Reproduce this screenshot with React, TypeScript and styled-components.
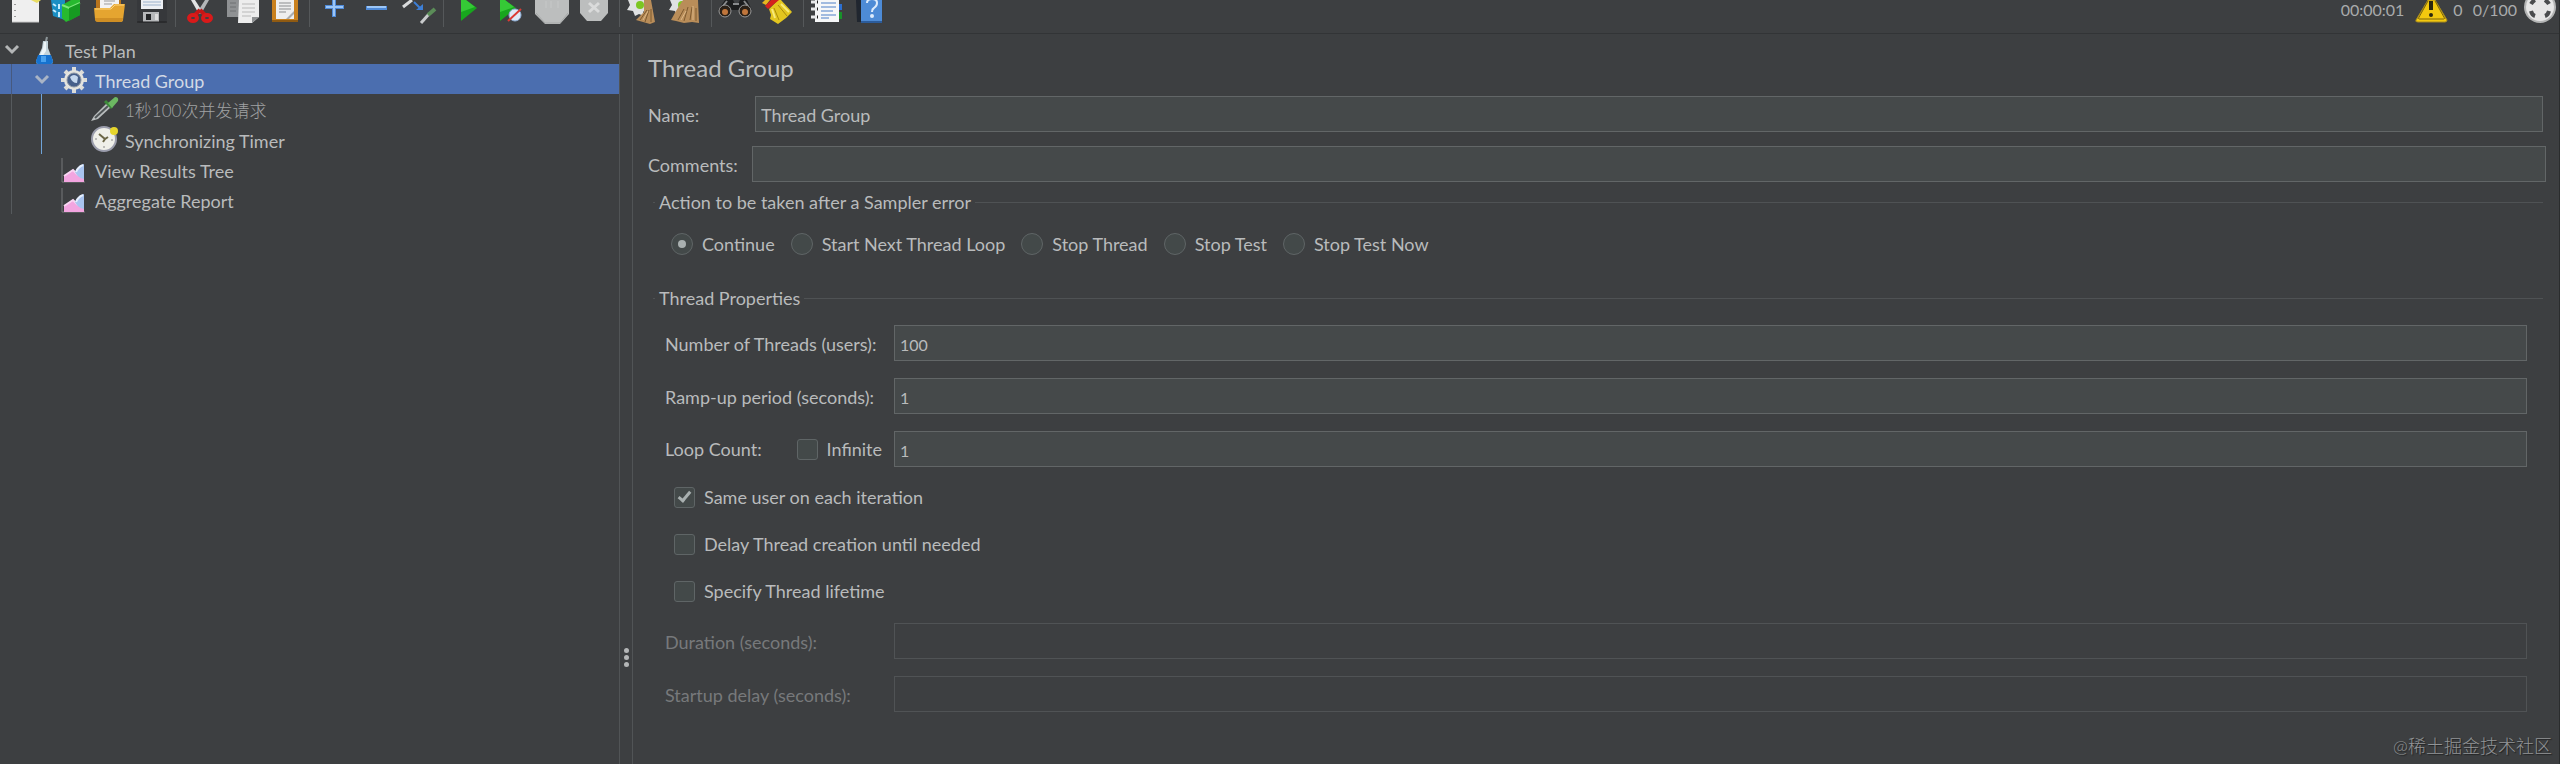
import React from "react";
import styled, { createGlobalStyle, css } from "styled-components";

const color = {
  bg: "#3d3f41",
  text: "#b9bbbc",
  dim: "#77797b",
  field: "#45494a",
  border: "#626667",
  line: "#4f5254",
  edge: "#323436",
  select: "#4b6eaf",
};

const GlobalStyle = createGlobalStyle`
  *, *::before, *::after { box-sizing: border-box; }
  body {
    margin: 0;
    background: ${color.bg};
    color: ${color.text};
    font-family: Lato, "Noto Sans CJK SC", sans-serif;
    font-size: 18px;
    line-height: 24px;
  }
  button, input { font: inherit; color: inherit; }
`;

const Window = styled.div`
  position: relative;
  display: flex;
  flex-direction: column;
  min-height: 100vh;
  overflow: hidden;
  border-right: 1px solid #2a2c2d;
`;

const Toolbar = styled.header`
  display: flex;
  align-items: flex-start;
  height: 34px;
  padding-left: 3px;
  border-bottom: 1px solid ${color.edge};
`;

const ToolGroup = styled.div`
  display: flex;
  & + & {
    padding-left: 8px;
    background: linear-gradient(#55585a, #55585a) 4px 0 / 1px 27px no-repeat;
  }
`;

const ToolButton = styled.button`
  display: block;
  width: 42px;
  height: 28px;
  padding: 0;
  border: 0;
  background: none;
  svg { display: block; }
`;

const Status = styled.div`
  display: flex;
  align-items: flex-start;
  margin-left: auto;
  padding-right: 2px;
  font-size: 16px;
  line-height: 20px;
  color: #a9abac;
  svg { display: block; }
`;

const Clock = styled.span`
  margin-right: 10px;
`;

const Count = styled.span`
  margin: 0 6px 0 4px;
`;

const Body = styled.div`
  display: flex;
  flex: 1;
`;

const Sidebar = styled.nav`
  flex: 0 0 620px;
  border-right: 1px solid #515456;
`;

const Tree = styled.ul`
  margin: 0;
  padding: 0;
  list-style: none;
`;

const Node = styled.li<{ $selected?: boolean }>`
  display: flex;
  height: 30px;
  background: ${(p) => (p.$selected ? color.select : "none")};
  color: ${(p) => (p.$selected ? "#d2d9e5" : color.text)};
`;

const Guide = styled.span<{ $tone?: string }>`
  width: 30px;
  ${(p) =>
    p.$tone &&
    css`
      background: linear-gradient(${p.$tone}, ${p.$tone}) 11px 0 / 1px 100% no-repeat;
    `}
`;

const Toggle = styled.button`
  width: 30px;
  padding: 0;
  border: 0;
  background: none;
  svg { display: block; }
`;

const NodeIcon = styled.span`
  width: 35px;
  svg { display: block; }
`;

const NodeText = styled.span<{ $muted?: boolean }>`
  padding-top: 5px;
  ${(p) => p.$muted && css`color: #a0a2a3; font-weight: 300; font-size: 17px;`}
`;

const Divider = styled.div`
  display: flex;
  flex-direction: column;
  align-items: center;
  width: 13px;
  padding-top: 614px;
  gap: 2px;
  border-right: 1px solid #515456;
`;

const Dot = styled.span`
  width: 5px;
  height: 5px;
  border-radius: 50%;
  background: #b4b6b7;
`;

const Panel = styled.main`
  flex: 1;
  min-width: 0;
  padding: 18px 12px 40px 15px;
`;

const Title = styled.h1`
  margin: 0 0 12px;
  font-size: 24px;
  line-height: 32px;
  font-weight: 400;
`;

const HeadRow = styled.div<{ $label: number; $end: number }>`
  display: grid;
  grid-template-columns: ${(p) => p.$label}px 1fr;
  align-items: center;
  margin-bottom: 14px;
  padding-right: ${(p) => p.$end}px;
  > label { padding-top: 2px; }
`;

const Field = styled.input<{ $numeric?: boolean }>`
  width: 100%;
  min-width: 0;
  height: 36px;
  padding: 2px 5px 0;
  border: 1px solid ${color.border};
  border-radius: 0;
  outline: 0;
  background: ${color.field};
  font-size: ${(p) => (p.$numeric ? 16 : 18)}px;
  &:disabled {
    border-color: #505355;
    background: ${color.bg};
  }
`;

const Group = styled.fieldset<{ $top: number }>`
  margin: ${(p) => p.$top}px 4px 0 5px;
  min-width: 0;
  padding: 0;
  border: 0 solid ${color.line};
  border-top-width: 1px;
`;

const Legend = styled.legend`
  margin-left: 2px;
  padding: 0 4px;
`;

const RadioRow = styled.div`
  display: flex;
  gap: 16px;
  padding: 18px 18px 0;
`;

const Choice = styled.label`
  display: flex;
  align-items: center;
  gap: 9px;
`;

const Radio = styled.input`
  display: grid;
  place-items: center;
  appearance: none;
  width: 22px;
  height: 22px;
  margin: 0;
  border: 1px solid #5f6566;
  border-radius: 50%;
  background: #434949;
  &:checked::after {
    content: "";
    width: 8px;
    height: 8px;
    border-radius: 50%;
    background: #a9b0b0;
  }
`;

const Check = styled.input`
  display: grid;
  justify-items: center;
  appearance: none;
  width: 21px;
  height: 21px;
  margin: 0;
  border: 1px solid #5f6566;
  border-radius: 3px;
  background: #434949;
  &:checked::after {
    content: "";
    width: 7px;
    height: 13px;
    margin-top: 1px;
    border: solid #a9b0b0;
    border-width: 0 3px 3px 0;
    transform: rotate(40deg);
  }
`;

const Rows = styled.div<{ $top: number }>`
  display: flex;
  flex-direction: column;
  gap: 17px;
  padding: ${(p) => p.$top}px 16px 0 12px;
`;

const Row = styled.div<{ $dim?: boolean }>`
  display: grid;
  grid-template-columns: 229px 1fr;
  align-items: center;
  color: ${(p) => (p.$dim ? color.dim : "inherit")};
  > label { padding-top: 2px; }
`;

const LoopCell = styled.div`
  display: flex;
  justify-content: space-between;
  padding-right: 12px;
`;

const Options = styled.div`
  display: flex;
  flex-direction: column;
  align-items: flex-start;
  gap: 23px;
  padding: 18px 21px 0;
`;

const Watermark = styled.div`
  position: absolute;
  right: 7px;
  bottom: 6px;
  font-size: 18px;
  font-weight: 300;
  color: #929496;
  text-shadow: 1px 1px 1px #1f2021;
`;

const Art = ({ w = 42, h = 28, children }: { w?: number; h?: number; children: React.ReactNode }) => (
  <svg width={w} height={h} viewBox={`0 0 ${w} ${h}`} aria-hidden="true">
    {children}
  </svg>
);

const NewIcon = () => (
  <Art>
    <path d="M9 0h27v22H9z" fill="#efefef" />
    <path d="M9 22h27" stroke="#c9c9c9" />
    <path d="M12 4v1M12 10v1M12 16v1" stroke="#999" strokeWidth="2" />
    <path d="M28 0h10l-4 3z" fill="#e9dd62" />
  </Art>
);
const TemplatesIcon = () => (
  <Art>
    <path d="M6 0h14v20l-12-4z" fill="#1a8fc4" />
    <path d="M8 4l3 2M8 10l3 2M14 4v5M14 12v5" stroke="#c3ecff" strokeWidth="2" />
    <path d="M17 5l9-5h9v15l-14 7-4-4z" fill="#27b92f" />
    <path d="M17 5l7 3 11-5" fill="none" stroke="#7fe77c" strokeWidth="2" />
    <path d="M24 8v13l11-6V3z" fill="#169a21" />
  </Art>
);
const OpenIcon = () => (
  <Art>
    <path d="M9 0h25v12H9z" fill="#b8741c" />
    <path d="M13 0h19v8H13z" fill="#f2f2f2" />
    <path d="M17 1h11M17 4h8" stroke="#9b9b9b" />
    <path d="M7 8h16l4-4h11l-2 16q0 2-3 2H11q-3 0-3-3z" fill="#e5a530" />
    <path d="M8 9h16l4-4h9" fill="none" stroke="#ffd478" />
    <path d="M8 18q0 4 3 4h22q3 0 3-4z" fill="#bf7f1c" opacity=".6" />
  </Art>
);
const SaveIcon = () => (
  <Art>
    <path d="M8 0h30v20l-2 3H10l-2-3z" fill="#36383b" />
    <path d="M12 0h22v9H12z" fill="#eceff3" />
    <path d="M14 2h18M14 5h18" stroke="#9cb2cc" />
    <path d="M14 12h16v10H14z" fill="#b6b8ba" />
    <path d="M17 14h5v6h-5z" fill="#232527" />
    <path d="M26 14h3v6h-3z" fill="#ddd" />
    <path d="M8 22h30" stroke="#1e1f20" />
  </Art>
);
const CutIcon = () => (
  <Art>
    <path d="M12 0h4l7 11-3 3z" fill="#e3e4e5" />
    <path d="M30 0h-4l-7 11 3 3z" fill="#b4b7b9" />
    <path d="M21 10l-5 5M21 10l5 5" stroke="#c51616" strokeWidth="4" />
    <ellipse cx="14" cy="18" rx="4" ry="3" fill="none" stroke="#d91a1a" strokeWidth="4" />
    <ellipse cx="28" cy="18" rx="4" ry="3" fill="none" stroke="#d91a1a" strokeWidth="4" />
  </Art>
);
const CopyIcon = () => (
  <Art>
    <path d="M6 0h20v17H6z" fill="#8f9193" />
    <path d="M9 3h6M9 7h6M9 11h6" stroke="#6f7173" />
    <path d="M18 0h20v17l-7 6H17z" fill="#ededed" />
    <path d="M21 4h13M21 8h13M21 12h13M21 16h9" stroke="#b9b9b9" />
    <path d="M31 23v-6h7z" fill="#8e9092" />
  </Art>
);
const PasteIcon = () => (
  <Art>
    <path d="M9 0h26v22H9z" fill="#c9801d" />
    <path d="M13 0h18v19H13z" fill="#eee" />
    <path d="M16 3h12M16 6h12M16 9h12M16 12h7" stroke="#8b8d8f" strokeWidth="1" />
    <path d="M23 19l8-8v3l-5 5z" fill="#a9abad" />
    <path d="M9 21h26" stroke="#8f5a12" strokeWidth="2" />
  </Art>
);
const PlusIcon = () => (
  <Art>
    <path d="M21 0v17M12 7h19" stroke="#4f8ad8" strokeWidth="4" />
    <path d="M21 0v16M13 7h17" stroke="#9cc6f6" strokeWidth="2" />
  </Art>
);
const MinusIcon = () => (
  <Art>
    <path d="M11 8h21" stroke="#4f8ad8" strokeWidth="4" />
    <path d="M12 7h19" stroke="#9cc6f6" strokeWidth="2" />
  </Art>
);
const ToggleIcon = () => (
  <Art>
    <path d="M6 7l9-7" stroke="#d9dbdc" strokeWidth="3" />
    <path d="M17 2l7 7" stroke="#3d7fd6" strokeWidth="2" />
    <path d="M26 4v6h-7z" fill="#3d7fd6" />
    <path d="M24 23l8-9" stroke="#c9cbcc" strokeWidth="3" />
    <path d="M31 15l7-6" stroke="#5b8d58" strokeWidth="4" />
  </Art>
);
const StartIcon = () => (
  <Art>
    <path d="M14 0h5l11 8-16 13z" fill="#18a61e" />
    <path d="M14 0h5l9 7-14 5z" fill="#35c936" />
  </Art>
);
const StartNowIcon = () => (
  <Art>
    <path d="M11 0h5l11 8-16 13z" fill="#18a61e" />
    <path d="M11 0h5l9 7-14 5z" fill="#35c936" />
    <circle cx="26" cy="15" r="6" fill="#dfe9f7" stroke="#8eaed6" />
    <path d="M19 21L32 9" stroke="#dc3a34" strokeWidth="2" />
  </Art>
);
const StopIcon = () => (
  <Art>
    <path d="M4 0h34v14l-9 10H14L4 14z" fill="#bcbebe" />
    <path d="M5 13l9 10h15l8-10" fill="none" stroke="#a6a8a8" />
    <path d="M15 1v7M20 1v7M27 1v7" stroke="#c6c8c8" />
  </Art>
);
const ShutdownIcon = () => (
  <Art>
    <path d="M7 0h28v13l-7 8H14l-7-8z" fill="#bcbebe" />
    <path d="M16 3l10 9M26 3l-10 9" stroke="#dadbdb" strokeWidth="3" />
  </Art>
);
const Sweep = ({ wide }: { wide?: boolean }) => (
  <Art>
    <path d="M5 0h17l2 8-4 4 1 4-5-2-4 2-2-5-6-1 3-5z" fill="#dfe1e2" />
    <circle cx="17" cy="5" r="4" fill="#7cc622" />
    <path d={wide ? "M18 0h15l1 23-7-1-8 1-8-2-5-1 5-9z" : "M21 0h7l4 22-5 2-14-4 8-8z"} fill="#b98d59" />
    <path
      d={wide ? "M13 20l6-11M19 21l4-14M25 20l2-13M31 21V8" : "M17 20l7-10M22 22l4-12M28 22V9"}
      stroke="#7d5a30"
    />
    <path d={wide ? "M16 20l5-9M28 20V6" : "M20 20l5-9"} stroke="#dcb888" />
  </Art>
);
const SearchIcon = () => (
  <Art>
    <path d="M10 0h8l2 4h3l2-4h7l5 10H3z" fill="#1c1d1e" />
    <path d="M12 1l-4 5M29 1l4 5M18 4h6" stroke="#888a8c" strokeWidth="2" />
    <circle cx="10" cy="11" r="6" fill="#2b2118" stroke="#98999a" />
    <circle cx="30" cy="11" r="6" fill="#2b2118" stroke="#98999a" />
    <circle cx="10" cy="12" r="3" fill="#c0763c" />
    <circle cx="30" cy="12" r="3" fill="#c0763c" />
  </Art>
);
const ResetIcon = () => (
  <Art>
    <path d="M5 3l3-3h5l-4 5z" fill="#e6b71f" />
    <path d="M12 9l9-9h3l11 12-6 6-8 6-8-5 1-4z" fill="#e3c61f" />
    <path d="M8 6L14 0h8L11 9z" fill="#d5221d" />
    <path d="M17 8l5 12M21 5l9 11" stroke="#a98b0b" />
    <path d="M15 9l3 9M24 4l8 8" stroke="#f7ea7b" strokeWidth="2" />
  </Art>
);
const FunctionIcon = () => (
  <Art>
    <path d="M29 4h6v6h-6z" fill="#2c6fd0" />
    <path d="M29 12h6v7h-6z" fill="#18912a" />
    <path d="M8 0h24v22H8z" fill="#f6f7f8" />
    <path d="M14 3h15M14 7h15M14 11h12M14 15h15M14 18h8" stroke="#4d7fc7" />
    <path d="M4 2h7M4 9h7M4 17h7" stroke="#e8e9ea" strokeWidth="3" />
    <path d="M10 2h1M10 9h1M10 17h1" stroke="#222" strokeWidth="3" />
  </Art>
);
const HelpIcon = () => (
  <Art>
    <path d="M7 0h5v22H8z" fill="#20262f" />
    <path d="M12 0h21v22H12z" fill="#4d8bd6" />
    <path d="M12 22h21" stroke="#2c5c9b" strokeWidth="2" />
    <path d="M18 3q0-4 5-4t5 4q0 3-3 5-2 1-2 4" fill="none" stroke="#dcebfc" strokeWidth="2" />
    <circle cx="23" cy="16" r="2" fill="#dcebfc" />
  </Art>
);

const tools: [string, () => React.JSX.Element][][] = [
  [["New", NewIcon], ["Templates", TemplatesIcon], ["Open", OpenIcon], ["Save", SaveIcon]],
  [["Cut", CutIcon], ["Copy", CopyIcon], ["Paste", PasteIcon]],
  [["Expand all", PlusIcon], ["Collapse all", MinusIcon], ["Toggle", ToggleIcon]],
  [["Start", StartIcon], ["Start no pauses", StartNowIcon], ["Stop", StopIcon], ["Shutdown", ShutdownIcon]],
  [["Clear", () => <Sweep />], ["Clear all", () => <Sweep wide />]],
  [["Search", SearchIcon], ["Reset search", ResetIcon]],
  [["Function helper", FunctionIcon], ["Help", HelpIcon]],
];

const WarningIcon = () => (
  <Art w={35}>
    <path d="M14 0h7l12 20q0 2-2 2H4q-3 0-2-2z" fill="#f2c80f" stroke="#a88a1c" />
    <path d="M17 1v9" stroke="#2b2710" strokeWidth="4" />
    <path d="M4 19L14 1M31 19L21 1M5 19h25" stroke="#7c660f" fill="none" />
    <circle cx="17" cy="15" r="2" fill="#2b2710" />
  </Art>
);
const TargetIcon = () => (
  <Art w={34}>
    <circle cx="17" cy="7" r="16" fill="#b4b5b5" />
    <circle cx="17" cy="7" r="14" fill="#e6e6e6" />
    <path d="M8 4q2-3 4-4M22 0q3 2 4 4M26 11q-1 4-4 5M12 16q-3-1-4-5" fill="none" stroke="#4a4c4e" strokeWidth="4" />
  </Art>
);

const Chevron = ({ tone }: { tone: string }) => (
  <Art w={30} h={30}>
    <path d="M6 12l6 6 6-6" fill="none" stroke={tone} strokeWidth="3" />
  </Art>
);
const FlaskIcon = () => (
  <Art w={30} h={30}>
    <path d="M13 7h5v7l5 13q0 3-2 3H8q-2 0-2-3l6-13z" fill="#c3d3da" />
    <path d="M14 8h2v9l-4 6H9l4-9z" fill="#edf5f8" />
    <path d="M8 21h13l2 6q0 3-2 3H8q-2 0-2-3z" fill="#1672cf" />
    <path d="M11 22h5v6h-5z" fill="#49a1ee" />
    <path d="M16 7l1-4" stroke="#8c9598" strokeWidth="2" />
  </Art>
);
const GearIcon = () => (
  <Art w={30} h={30}>
    <g stroke="#dcdcd8" strokeWidth="4">
      <path d="M14 3v26M1 16h26M5 7l18 18M23 7L5 25" />
    </g>
    <circle cx="14" cy="16" r="10" fill="#e4e4e0" />
    <circle cx="14" cy="16" r="7" fill="#465f8a" stroke="#8994a4" />
    <path d="M10 13q4-4 8 0l-1 6q-5 0-7-6z" fill="#c5d8ef" />
  </Art>
);
const PipetteIcon = () => (
  <Art w={30} h={30}>
    <path d="M1 27l3-5L17 9l4 4L8 25z" fill="#b9bdbe" />
    <path d="M5 24L18 12" stroke="#505557" strokeWidth="2" />
    <path d="M15 7l7 7" stroke="#3d8a3a" strokeWidth="3" />
    <path d="M18 9l7-6q4 0 3 4l-6 7z" fill="#6cb862" />
  </Art>
);
const TimerIcon = () => (
  <Art w={30} h={30}>
    <circle cx="14" cy="15" r="12" fill="#efefe9" stroke="#9b9dac" strokeWidth="2" />
    <path d="M9 10l6 5 3-2M15 15l-2 3" fill="none" stroke="#6b6647" strokeWidth="2" />
    <path d="M5 15h2M14 24v-2M23 16h-2" stroke="#888" />
    <circle cx="24" cy="7" r="4" fill="#e6d52c" />
  </Art>
);
const ChartIcon = () => (
  <Art w={30} h={30}>
    <path d="M2 4v24h23" fill="none" stroke="#76797b" />
    <path d="M4 28v-6l9-6 7 6h4v6z" fill="#f3a5e0" />
    <path d="M4 22l9-6 5 5" fill="none" stroke="#f8d6f2" strokeWidth="2" />
    <path d="M24 10v15q-6-1-9-7 2-6 9-8z" fill="#a9c4ef" />
    <path d="M23 11q-5 2-7 7" fill="none" stroke="#e6effc" strokeWidth="2" />
  </Art>
);

const GREY = "#565a5d";
const BLUE = "#6fa3d8";

const actions = ["Continue", "Start Next Thread Loop", "Stop Thread", "Stop Test", "Stop Test Now"];

export default function App() {
  return (
    <>
      <GlobalStyle />
      <Window>
        <Toolbar>
          {tools.map((group, i) => (
            <ToolGroup key={i}>
              {group.map(([name, Icon]) => (
                <ToolButton key={name} type="button" aria-label={name}>
                  <Icon />
                </ToolButton>
              ))}
            </ToolGroup>
          ))}
          <Status>
            <Clock>00:00:01</Clock>
            <WarningIcon />
            <Count>0</Count>
            <Count>0/100</Count>
            <TargetIcon />
          </Status>
        </Toolbar>
        <Body>
          <Sidebar aria-label="Test plan">
            <Tree>
              <Node>
                <Toggle type="button" aria-label="Collapse Test Plan"><Chevron tone="#b4b6b7" /></Toggle>
                <NodeIcon><FlaskIcon /></NodeIcon>
                <NodeText>Test Plan</NodeText>
              </Node>
              <Node $selected>
                <Guide $tone="#46597f" />
                <Toggle type="button" aria-label="Collapse Thread Group"><Chevron tone="#a9b4c6" /></Toggle>
                <NodeIcon><GearIcon /></NodeIcon>
                <NodeText>Thread Group</NodeText>
              </Node>
              <Node>
                <Guide $tone={GREY} />
                <Guide $tone={BLUE} />
                <Guide />
                <NodeIcon><PipetteIcon /></NodeIcon>
                <NodeText $muted>1秒100次并发请求</NodeText>
              </Node>
              <Node>
                <Guide $tone={GREY} />
                <Guide $tone={BLUE} />
                <Guide />
                <NodeIcon><TimerIcon /></NodeIcon>
                <NodeText>Synchronizing Timer</NodeText>
              </Node>
              {["View Results Tree", "Aggregate Report"].map((name) => (
                <Node key={name}>
                  <Guide $tone={GREY} />
                  <Guide />
                  <NodeIcon><ChartIcon /></NodeIcon>
                  <NodeText>{name}</NodeText>
                </Node>
              ))}
            </Tree>
          </Sidebar>
          <Divider><Dot /><Dot /><Dot /></Divider>
          <Panel>
            <Title>Thread Group</Title>
            <HeadRow $label={107} $end={4}>
              <label htmlFor="name">Name:</label>
              <Field id="name" defaultValue="Thread Group" />
            </HeadRow>
            <HeadRow $label={104} $end={1}>
              <label htmlFor="comments">Comments:</label>
              <Field id="comments" />
            </HeadRow>
            <Group $top={-6}>
              <Legend>Action to be taken after a Sampler error</Legend>
              <RadioRow>
                {actions.map((name, i) => (
                  <Choice key={name}>
                    <Radio type="radio" name="on-error" defaultChecked={i === 0} />
                    {name}
                  </Choice>
                ))}
              </RadioRow>
            </Group>
            <Group $top={30}>
              <Legend>Thread Properties</Legend>
              <Rows $top={15}>
                <Row>
                  <label htmlFor="threads">Number of Threads (users):</label>
                  <Field $numeric id="threads" defaultValue="100" />
                </Row>
                <Row>
                  <label htmlFor="ramp">Ramp-up period (seconds):</label>
                  <Field $numeric id="ramp" defaultValue="1" />
                </Row>
                <Row>
                  <LoopCell>
                    <label htmlFor="loops">Loop Count:</label>
                    <Choice><Check type="checkbox" />Infinite</Choice>
                  </LoopCell>
                  <Field $numeric id="loops" defaultValue="1" />
                </Row>
              </Rows>
              <Options>
                <Choice><Check type="checkbox" defaultChecked />Same user on each iteration</Choice>
                <Choice><Check type="checkbox" />Delay Thread creation until needed</Choice>
                <Choice><Check type="checkbox" />Specify Thread lifetime</Choice>
              </Options>
              <Rows $top={20}>
                <Row $dim>
                  <label htmlFor="duration">Duration (seconds):</label>
                  <Field id="duration" disabled />
                </Row>
                <Row $dim>
                  <label htmlFor="delay">Startup delay (seconds):</label>
                  <Field id="delay" disabled />
                </Row>
              </Rows>
            </Group>
          </Panel>
        </Body>
        <Watermark>@稀土掘金技术社区</Watermark>
      </Window>
    </>
  );
}
